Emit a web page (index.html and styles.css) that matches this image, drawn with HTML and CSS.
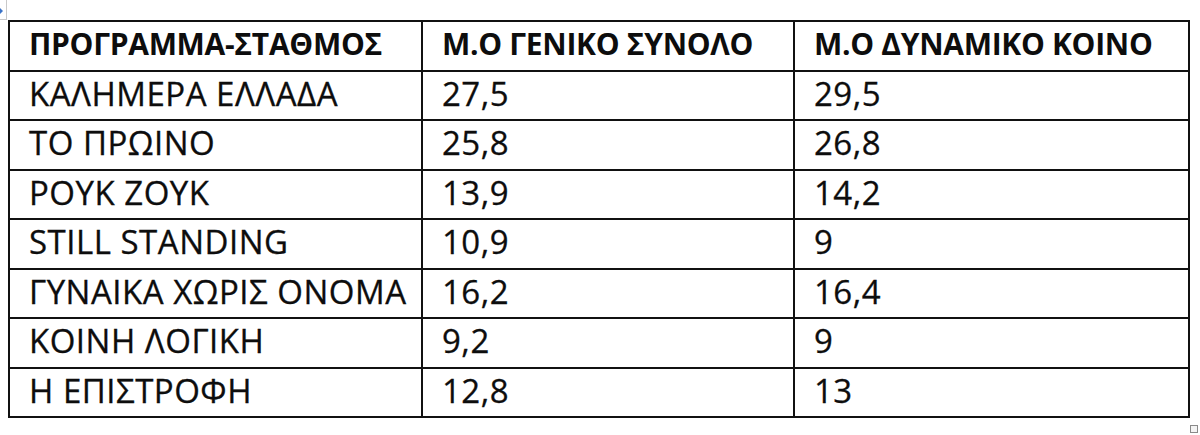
FILE: index.html
```html
<!DOCTYPE html>
<html lang="el">
<head>
<meta charset="utf-8">
<title>Πίνακας</title>
<link rel="stylesheet" href="styles.css">
</head>
<body>
<div class="page">
  <span class="handle-arrow"></span>
  <span class="handle-corner"></span>
  <table class="grid">
    <colgroup>
      <col class="c1"><col class="c2"><col class="c3">
    </colgroup>
    <thead>
      <tr><th>ΠΡΟΓΡΑΜΜΑ-ΣΤΑΘΜΟΣ</th><th>Μ.Ο ΓΕΝΙΚΟ ΣΥΝΟΛΟ</th><th>Μ.Ο ΔΥΝΑΜΙΚΟ ΚΟΙΝΟ</th></tr>
    </thead>
    <tbody>
      <tr><td>ΚΑΛΗΜΕΡΑ ΕΛΛΑΔΑ</td><td>27,5</td><td>29,5</td></tr>
      <tr><td>ΤΟ ΠΡΩΙΝΟ</td><td>25,8</td><td>26,8</td></tr>
      <tr><td>ΡΟΥΚ ΖΟΥΚ</td><td>13,9</td><td>14,2</td></tr>
      <tr><td>STILL STANDING</td><td>10,9</td><td>9</td></tr>
      <tr><td>ΓΥΝΑΙΚΑ ΧΩΡΙΣ ΟΝΟΜΑ</td><td>16,2</td><td>16,4</td></tr>
      <tr><td>ΚΟΙΝΗ ΛΟΓΙΚΗ</td><td>9,2</td><td>9</td></tr>
      <tr><td>Η ΕΠΙΣΤΡΟΦΗ</td><td>12,8</td><td>13</td></tr>
    </tbody>
  </table>
  <span class="resize-box"></span>
</div>
</body>
</html>
```
FILE: styles.css
```css
html, body {
  margin: 0;
  padding: 0;
  background: #ffffff;
}
body {
  width: 1200px;
  height: 435px;
  overflow: hidden;
  font-family: "Open Sans", "Noto Sans", sans-serif;
  color: #0d0d0d;
}
.page {
  position: relative;
  width: 1200px;
  height: 435px;
  padding: 20px 0 0 8px;
  box-sizing: border-box;
}
.grid {
  border-collapse: collapse;
  width: 1180px;
  table-layout: fixed;
}
.c1 { width: 413px; }
.c2 { width: 372px; }
.c3 { width: 395px; }
.grid th,
.grid td {
  border: 2px solid #111;
  height: 44.5px;
  padding: 0 0 3px 19px;
  font-size: 33px;
  letter-spacing: 0.5px;
  line-height: 40px;
  text-align: left;
  vertical-align: middle;
  white-space: nowrap;
  font-weight: 400;
  -webkit-text-stroke: 0.3px #0d0d0d;
}
.grid th {
  font-size: 30px;
  letter-spacing: -0.3px;
  font-weight: 700;
  -webkit-text-stroke: 0;
}
.handle-arrow {
  position: absolute;
  left: 0;
  top: 8px;
  width: 0;
  height: 0;
  border-top: 3px solid transparent;
  border-bottom: 3px solid transparent;
  border-left: 3px solid #3b73c7;
}
.handle-corner {
  position: absolute;
  left: 0;
  top: 0;
  width: 7px;
  height: 20px;
  border-right: 1px solid #c9c9c9;
  border-bottom: 1px solid #c9c9c9;
  box-sizing: border-box;
}
.resize-box {
  position: absolute;
  left: 1190px;
  top: 425px;
  width: 8px;
  height: 8px;
  border: 1px solid #8a8a8a;
  background: #f4f4f4;
  box-sizing: border-box;
}
```
